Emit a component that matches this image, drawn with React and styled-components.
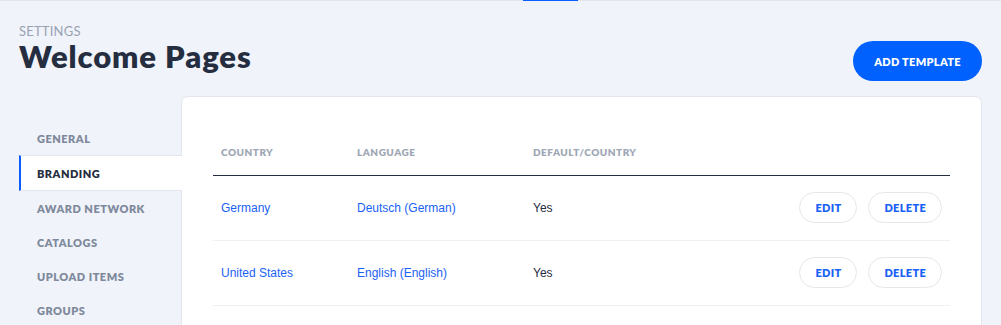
import React from 'react'
import styled, { createGlobalStyle } from 'styled-components'

const GlobalStyle = createGlobalStyle`
  html, body {
    margin: 0;
    padding: 0;
    background: #f0f3fa;
  }
  body {
    font-family: 'Lato', 'Liberation Sans', sans-serif;
    color: #252d40;
  }
  * { box-sizing: border-box; }
`

const rows = [
  { country: 'Germany', language: 'Deutsch (German)', isDefault: 'Yes' },
  { country: 'United States', language: 'English (English)', isDefault: 'Yes' },
]

const navItems = ['General', 'Branding', 'Award Network', 'Catalogs', 'Upload Items', 'Groups']

const App = () => {
  return (
    <Page>
      <GlobalStyle />
      <TopLine>
        <TopMarker />
      </TopLine>
      <Header>
        <div>
          <Eyebrow>Settings</Eyebrow>
          <Title>Welcome Pages</Title>
        </div>
        <PrimaryButton>Add Template</PrimaryButton>
      </Header>
      <Body>
        <SideNav>
          {navItems.map((item) => (
            <NavItem key={item} $active={item === 'Branding'}>{item}</NavItem>
          ))}
        </SideNav>
        <Card>
          <Table>
            <thead>
              <tr>
                <Th $width="136px">Country</Th>
                <Th $width="176px">Language</Th>
                <Th>Default/Country</Th>
                <Th />
              </tr>
            </thead>
            <tbody>
              {rows.map((row) => (
                <tr key={row.country}>
                  <Td><LinkText>{row.country}</LinkText></Td>
                  <Td><LinkText>{row.language}</LinkText></Td>
                  <Td>{row.isDefault}</Td>
                  <Td>
                    <Actions>
                      <GhostButton>Edit</GhostButton>
                      <GhostButton>Delete</GhostButton>
                    </Actions>
                  </Td>
                </tr>
              ))}
            </tbody>
          </Table>
        </Card>
      </Body>
    </Page>
  )
}

const Page = styled.div`
  width: 1001px;
  height: 325px;
  overflow: hidden;
`

const TopLine = styled.div`
  height: 1px;
  background: #e2e5ec;
  padding-left: 523px;
`

const TopMarker = styled.div`
  width: 55px;
  height: 1px;
  background: #0a5cff;
`

const Header = styled.div`
  display: flex;
  justify-content: space-between;
  align-items: flex-start;
  padding: 23px 19px 0 19px;
`

const Eyebrow = styled.div`
  font-size: 13px;
  line-height: 14px;
  color: #99a2b3;
  text-transform: uppercase;
  letter-spacing: 0.2px;
`

const Title = styled.h1`
  margin: 2px 0 0;
  font-size: 31px;
  line-height: 32px;
  font-weight: 800;
  letter-spacing: 0.9px;
  color: #252d40;
`

const PrimaryButton = styled.button`
  width: 129px;
  height: 40px;
  margin-top: 17px;
  border: none;
  border-radius: 20px;
  background: #0061fe;
  color: #fff;
  font-family: 'Lato', sans-serif;
  font-size: 11px;
  font-weight: 800;
  letter-spacing: 0.3px;
  text-transform: uppercase;
`

const Body = styled.div`
  display: flex;
  margin-top: 15px;
  padding: 0 19px;
`

const SideNav = styled.nav`
  width: 162px;
  flex-shrink: 0;
  padding-top: 25px;
  display: flex;
  flex-direction: column;
`

const NavItem = styled.div`
  height: ${(p) => (p.$active ? '36px' : '34px')};
  display: flex;
  align-items: center;
  padding-left: 16px;
  font-size: 11px;
  font-weight: 800;
  letter-spacing: 0.5px;
  text-transform: uppercase;
  color: ${(p) => (p.$active ? '#252d40' : '#7e899b')};
  background: ${(p) => (p.$active ? '#fff' : 'transparent')};
  border-left: 2px solid ${(p) => (p.$active ? '#0a5cff' : 'transparent')};
  border-top: 1px solid ${(p) => (p.$active ? '#e3e6ed' : 'transparent')};
  border-bottom: 1px solid ${(p) => (p.$active ? '#e3e6ed' : 'transparent')};
  margin-right: -1px;
  position: relative;
  z-index: 1;
`

const Card = styled.div`
  flex: 1;
  background: #fff;
  border: 1px solid #e3e6ed;
  border-radius: 7px;
  padding: 32px 31px 0;
  min-height: 260px;
`

const Table = styled.table`
  width: 100%;
  border-collapse: collapse;
`

const Th = styled.th`
  width: ${(p) => p.$width || 'auto'};
  height: 46px;
  padding: 0 8px;
  text-align: left;
  font-size: 10px;
  font-weight: 800;
  letter-spacing: 0.5px;
  text-transform: uppercase;
  color: #a0a8b6;
  border-bottom: 1px solid #252d40;
`

const Td = styled.td`
  height: 65px;
  padding: 0 8px;
  font-family: 'Liberation Sans', Arial, sans-serif;
  font-size: 12px;
  color: #252d40;
  border-bottom: 1px solid #eef0f3;
`

const LinkText = styled.span`
  color: #1a62f5;
`

const Actions = styled.div`
  display: flex;
  justify-content: flex-end;
  gap: 11px;
`

const GhostButton = styled.button`
  height: 31px;
  padding: 0 15px;
  border: 1px solid #e5e7eb;
  border-radius: 16px;
  background: #fff;
  color: #1a62f5;
  font-family: 'Lato', sans-serif;
  font-size: 11px;
  font-weight: 800;
  letter-spacing: 0.3px;
  text-transform: uppercase;
`

export default App
